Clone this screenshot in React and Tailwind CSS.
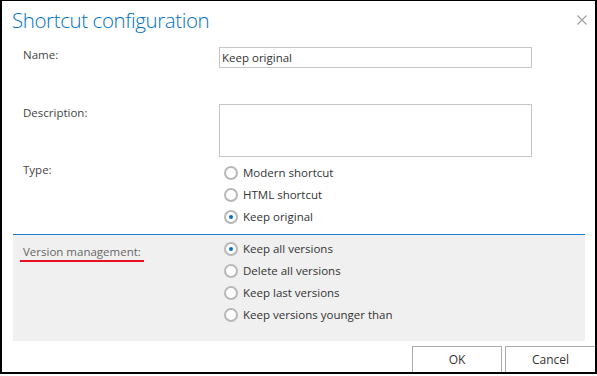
import React from "react";

function Radio({ checked, label }) {
  return (
    <div className="flex items-center h-[22px]">
      <div className="w-[14px] h-[14px] rounded-full border-2 border-[#b8b8b8] bg-white flex items-center justify-center shrink-0">
        {checked && <div className="w-[4px] h-[4px] rounded-full bg-[#0072c6]" />}
      </div>
      <span className="ml-[5px] text-[11.5px] text-[#333] leading-[16px]">{label}</span>
    </div>
  );
}

export default function App() {
  return (
    <div className="w-[597px] h-[376px] bg-white" style={{ fontFamily: '"Open Sans", "Noto Sans", sans-serif' }}>
      <div className="w-[597px] h-[374px] border-black border-t border-l-2 border-r-2 border-b-2 flex flex-col">
        <div className="flex items-start justify-between h-[40px] shrink-0">
          <div className="ml-[10px] mt-[5px] text-[20.5px] tracking-[-0.4px] font-light text-[#0072c6] leading-[28px]">Shortcut configuration</div>
          <svg className="mr-[8px] mt-[14px]" width="10" height="10" viewBox="0 0 10 10">
            <path d="M0.5 0.5 L9.5 9.5 M9.5 0.5 L0.5 9.5" stroke="#a0a0a0" strokeWidth="1.2" fill="none" />
          </svg>
        </div>
        <div className="pl-[11px] pr-[10px] flex flex-col shrink-0">
          <div className="flex h-[57px] mt-[6px] shrink-0">
            <div className="w-[206px] pl-[10px] text-[11.5px] leading-[16px] text-[#444]">Name:</div>
            <div className="w-[313px] h-[21px] border border-[#c6c6c6] px-[2px] text-[11.5px] text-[#333] leading-[19px]">Keep original</div>
          </div>
          <div className="flex h-[58px] shrink-0">
            <div className="w-[206px] pl-[10px] pt-[1px] text-[11.5px] leading-[16px] text-[#444]">Description:</div>
            <div className="w-[313px] h-[53px] border border-[#c6c6c6]" />
          </div>
          <div className="flex h-[72px] shrink-0">
            <div className="w-[206px] pl-[10px] text-[11.5px] leading-[16px] text-[#444]">Type:</div>
            <div className="flex flex-col pl-[5px]">
              <Radio label="Modern shortcut" />
              <Radio label="HTML shortcut" />
              <Radio checked label="Keep original" />
            </div>
          </div>
          <div className="h-[1px] bg-[#1a7fcf] shrink-0" />
          <div className="flex h-[106px] bg-[#f0f0f0] pt-[3px] shrink-0">
            <div className="w-[206px] pl-[7px]">
              <div className="inline-block px-[3px] text-[11.5px] text-[#666] border-b-2 border-[#e81123] leading-[16px]">Version management:</div>
            </div>
            <div className="flex flex-col pl-[5px]">
              <Radio checked label="Keep all versions" />
              <Radio label="Delete all versions" />
              <Radio label="Keep last versions" />
              <Radio label="Keep versions younger than" />
            </div>
          </div>
        </div>
        <div className="flex justify-end gap-[3px] mt-[5px] shrink-0">
          <div className="w-[90px] h-[26px] border border-b-0 border-[#ababab] bg-white flex items-center justify-center text-[12px] text-[#333]">OK</div>
          <div className="w-[90px] h-[26px] border border-b-0 border-r-0 border-[#ababab] bg-white flex items-center justify-center text-[12px] text-[#333]">Cancel</div>
        </div>
      </div>
    </div>
  );
}
